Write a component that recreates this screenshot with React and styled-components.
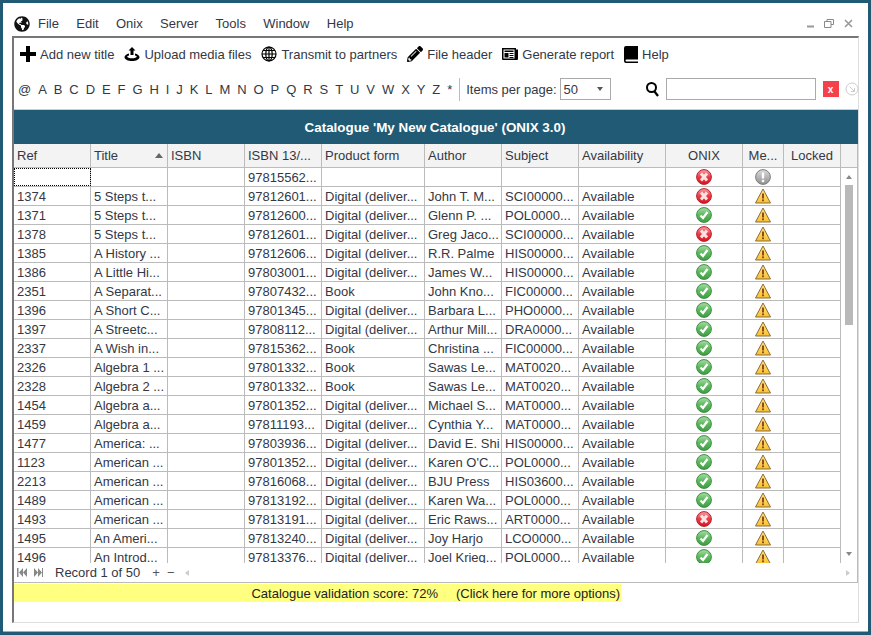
import React from 'react';
import styled, { createGlobalStyle } from 'styled-components';
import { FaPencilAlt, FaGlobeAmericas } from 'react-icons/fa';

const Global = createGlobalStyle`
  html, body { margin: 0; padding: 0; background: #fff; }
  * { box-sizing: border-box; }
`;

const Win = styled.div`
  width: 871px; height: 635px; border: 3px solid #205a74; background: #fff;
  font-family: "Liberation Sans", Arial, sans-serif; font-size: 13px; color: #343844;
  padding: 0 9px; display: flex; flex-direction: column; overflow: hidden;
  box-shadow: inset 0 -1px 0 #aaa;
`;
const TitleBar = styled.div`
  height: 33px; flex: none; display: flex; align-items: center; padding: 8px 0 0 2px;
`;
const MenuItem = styled.span`margin-left: ${p => p.$first ? '8px' : '17.300px'};`;
const WinControls = styled.div`margin-left: auto; display: flex; gap: 10px; align-items: center; padding-right: 6px;`;
const Panel = styled.div`
  flex: none; height: 587px; border: 1px solid #ddd; border-top: 2px solid #777; border-left: 2px solid #777;
  display: flex; flex-direction: column;
`;
const ActionBar = styled.div`height: 32px; flex: none; display: flex; align-items: center; padding: 0 0 0 6px; gap: 10px;`;
const ActionBtn = styled.span`display: inline-flex; align-items: center; gap: 4px; white-space: nowrap;`;
const FilterBar = styled.div`height: 40px; flex: none; display: flex; align-items: center; padding: 0 0 1px 4px; border-bottom: 1px solid #ccc; white-space: nowrap;`;
const Letter = styled.span`margin-right: 6.930px; flex: none;`;
const Divider = styled.span`flex: none; width: 1px; height: 23px; background: #bbb; margin: 0 6px 0 0;`;
const PerPage = styled.span`flex: none;`;
const PageSelect = styled.div`flex: none; width: 51px; height: 22px; border: 1px solid #aaa; margin-left: 3px; display: flex; align-items: center; padding: 0 7px 0 3px; justify-content: space-between;`;
const Caret = styled.span`width: 0; height: 0; border: 3.500px solid transparent; border-top: 4px solid #555; border-bottom: 0;`;
const SearchIcon = styled.svg`margin-left: 35px; flex: none;`;
const SearchBox = styled.div`flex: none; width: 150px; height: 22px; border: 1px solid #aaa; margin-left: 7px;`;
const ClearBtn = styled.span`flex: none; width: 16px; height: 16px; background: #f5424a; color: #fff; font-size: 10px; font-weight: bold; display: flex; align-items: center; justify-content: center; margin-left: 7px;`;
const Go = styled.svg`flex: none; margin-left: 6px;`;
const Caption = styled.div`height: 34px; flex: none; background: #205a74; color: #fff; font-weight: bold; font-size: 13.400px; display: flex; align-items: center; justify-content: center; padding-right: 2px;`;
const Grid = styled.div`height: 439px; flex: none; border-right: 1px solid #bbb; border-bottom: 1px solid #bbb; display: flex; flex-direction: column; position: relative;`;
const cols = '77px 77px 77px 77px 103px 77px 77px 87px 77px 41px 57px 16px';
const HeadRow = styled.div`height: 24px; flex: none; display: grid; grid-template-columns: ${cols}; background: #f3f3f3; border-bottom: 1px solid #bbb;`;
const HeadCell = styled.div`display: flex; align-items: center; justify-content: ${p => p.$center ? 'center' : 'space-between'}; padding: ${p => p.$center ? '0' : '0 4px 0 3px'}; border-right: 1px solid #bbb; white-space: nowrap; overflow: hidden;`;
const SortUp = styled.span`width: 0; height: 0; border: 4.500px solid transparent; border-bottom: 5px solid #666; border-top: 0;`;
const BodyWrap = styled.div`height: 395px; flex: none; overflow: hidden; position: relative;`;
const Row = styled.div`height: 19px; display: grid; grid-template-columns: ${cols}; border-bottom: 1px solid #bbb;`;
const Cell = styled.div`display: flex; align-items: center; justify-content: ${p => p.$center ? 'center' : 'flex-start'}; padding: ${p => p.$center ? '0' : '0 3px'}; border-right: 1px solid #bbb; white-space: nowrap; overflow: hidden; outline: ${p => p.$focus ? '1px dotted #000' : 'none'}; outline-offset: -1px;`;
const ScrollCell = styled.div`background: #f3f3f3;`;
const ScrollBar = styled.div`position: absolute; top: 0; right: 0; width: 16px; height: 395px; background: #fff;`;
const Thumb = styled.div`position: absolute; left: 4px; top: 17px; width: 8px; height: 140px; background: #b9b9b9;`;
const ArrowUp = styled.span`position: absolute; left: 5px; top: 7px; width: 0; height: 0; border: 3px solid transparent; border-bottom: 4px solid #888; border-top: 0;`;
const ArrowDown = styled.span`position: absolute; left: 5px; bottom: 7px; width: 0; height: 0; border: 3px solid transparent; border-top: 4px solid #888; border-bottom: 0;`;
const Footer = styled.div`height: 19px; flex: none; display: flex; align-items: center; padding: 0 0 0 3px;`;
const Pager = styled.svg`flex: none;`;
const RecordLabel = styled.span`margin: 0 12px 0 12px;`;
const FootOp = styled.span`margin-right: 7px; color: #555;`;
const TriRight = styled.span`margin-left: auto; margin-right: 7px; width: 0; height: 0; border: 3px solid transparent; border-left: 4px solid #ccc; border-right: 0;`;
const TriLeft = styled.span`margin-left: 4px; width: 0; height: 0; border: 3px solid transparent; border-right: 4px solid #ccc; border-left: 0;`;
const Score = styled.div`width: 607px; height: 18px; flex: none; margin-top: 1px; background: #ffff80; color: #222; display: flex; align-items: center; justify-content: flex-end; padding-right: 1px; white-space: pre;`;

const D = 'Digital (deliver...';
const A = 'Available';
const rows = [
  ['', '', '97815562...', '', '', '', '', 'r', 'g'],
  ['1374', '5 Steps t...', '97812601...', D, 'John T. M...', 'SCI00000...', A, 'r', 'w'],
  ['1371', '5 Steps t...', '97812600...', D, 'Glenn P. ...', 'POL0000...', A, 'o', 'w'],
  ['1378', '5 Steps t...', '97812601...', D, 'Greg Jaco...', 'SCI00000...', A, 'r', 'w'],
  ['1385', 'A History ...', '97812606...', D, 'R.R. Palme', 'HIS00000...', A, 'o', 'w'],
  ['1386', 'A Little Hi...', '97803001...', D, 'James W...', 'HIS00000...', A, 'o', 'w'],
  ['2351', 'A Separat...', '97807432...', 'Book', 'John Kno...', 'FIC00000...', A, 'o', 'w'],
  ['1396', 'A Short C...', '97801345...', D, 'Barbara L...', 'PHO0000...', A, 'o', 'w'],
  ['1397', 'A Streetc...', '97808112...', D, 'Arthur Mill...', 'DRA0000...', A, 'o', 'w'],
  ['2337', 'A Wish in...', '97815362...', 'Book', 'Christina ...', 'FIC00000...', A, 'o', 'w'],
  ['2326', 'Algebra 1 ...', '97801332...', 'Book', 'Sawas Le...', 'MAT0020...', A, 'o', 'w'],
  ['2328', 'Algebra 2 ...', '97801332...', 'Book', 'Sawas Le...', 'MAT0020...', A, 'o', 'w'],
  ['1454', 'Algebra a...', '97801352...', D, 'Michael S...', 'MAT0000...', A, 'o', 'w'],
  ['1459', 'Algebra a...', '97811193...', D, 'Cynthia Y...', 'MAT0000...', A, 'o', 'w'],
  ['1477', 'America: ...', '97803936...', D, 'David E. Shi', 'HIS00000...', A, 'o', 'w'],
  ['1123', 'American ...', '97801352...', D, "Karen O'C...", 'POL0000...', A, 'o', 'w'],
  ['2213', 'American ...', '97816068...', D, 'BJU Press', 'HIS03600...', A, 'o', 'w'],
  ['1489', 'American ...', '97813192...', D, 'Karen Wa...', 'POL0000...', A, 'o', 'w'],
  ['1493', 'American ...', '97813191...', D, 'Eric Raws...', 'ART0000...', A, 'r', 'w'],
  ['1495', 'An Ameri...', '97813240...', D, 'Joy Harjo', 'LCO0000...', A, 'o', 'w'],
  ['1496', 'An Introd...', '97813376...', D, 'Joel Krieg...', 'POL0000...', A, 'o', 'w'],
];

const GradientDefs = styled.svg`position: absolute;`;
const Defs = () => (
  <GradientDefs width="0" height="0">
    <defs>
      <linearGradient id="gr" x1="0" y1="0" x2="0" y2="1"><stop offset="0" stopColor="#f7a0a4" /><stop offset=".5" stopColor="#ea3c48" /><stop offset="1" stopColor="#d6141f" /></linearGradient>
      <linearGradient id="go" x1="0" y1="0" x2="0" y2="1"><stop offset="0" stopColor="#a8dca8" /><stop offset=".5" stopColor="#5cb85c" /><stop offset="1" stopColor="#3f9c45" /></linearGradient>
      <linearGradient id="gg" x1="0" y1="0" x2="0" y2="1"><stop offset="0" stopColor="#dcdcdc" /><stop offset="1" stopColor="#8f8f8f" /></linearGradient>
      <linearGradient id="gw" x1="0" y1="0" x2="0" y2="1"><stop offset="0" stopColor="#ffe98a" /><stop offset="1" stopColor="#f8c030" /></linearGradient>
    </defs>
  </GradientDefs>
);

const Status = ({ k }) => {
  if (k === 'w') return (
    <svg width="16" height="16" viewBox="0 0 16 16"><path d="M8 1 L15.500 15 H.5 Z" fill="url(#gw)" stroke="#8c6c34" strokeWidth="1" strokeLinejoin="round" /><path d="M8 5.500v5" stroke="#8a3a10" strokeWidth="1.800" /><rect x="7.100" y="11.400" width="1.800" height="1.800" fill="#8a3a10" /></svg>
  );
  const s = { r: '#b8202c', o: '#3d8f42', g: '#7d7d7d' }[k];
  return (
    <svg width="16" height="16" viewBox="0 0 16 16">
      <circle cx="8" cy="8" r="7.400" fill={`url(#g${k})`} stroke={s} />
      {k === 'r' && <path d="M5 4.500 L11 11.500 M11 4.500 L5 11.500" stroke="#fbe3e3" strokeWidth="3" />}
      {k === 'o' && <path d="M4.500 8.500 L7 11 L11.500 5" stroke="#fff" strokeWidth="2.200" fill="none" />}
      {k === 'g' && <><path d="M8 3.500v6" stroke="#fff" strokeWidth="2.400" /><rect x="6.800" y="10.800" width="2.400" height="2.400" fill="#fff" /></>}
    </svg>
  );
};

const letters = '@ABCDEFGHIJKLMNOPQRSTUVWXYZ*'.split('');

export default function App() {
  return (
    <Win>
      <Global />
      <Defs />
      <TitleBar>
        <FaGlobeAmericas size={16} color="#111" />
        {['File', 'Edit', 'Onix', 'Server', 'Tools', 'Window', 'Help'].map((m, i) => <MenuItem key={m} $first={i === 0}>{m}</MenuItem>)}
        <WinControls>
          <svg width="7" height="8" viewBox="0 0 7 8"><rect y="5.500" width="7" height="2" fill="#999" /></svg>
          <svg width="10" height="9" viewBox="0 0 10 9"><path d="M3 2V.5h6.500v5H7M.5 2.500h6.500v6H.5z" fill="none" stroke="#888" /></svg>
          <svg width="9" height="9" viewBox="0 0 9 9"><path d="M1 1l7 7M8 1l-7 7" stroke="#999" strokeWidth="1.600" /></svg>
        </WinControls>
      </TitleBar>
      <Panel>
        <ActionBar>
          <ActionBtn><svg width="16" height="16" viewBox="0 0 16 16"><path d="M6 0h4v6h6v4h-6v6H6v-6H0V6h6z" fill="#000" /></svg>Add new title</ActionBtn>
          <ActionBtn><svg width="16" height="16" viewBox="0 0 16 16"><path d="M8 1 L11.500 4.500 H9.500 V9 H6.500 V4.500 H4.500 Z" fill="#000" /><path d="M5 7.500 C2.500 8 .5 9.500 .5 11 C.5 13.500 4 15 8 15 C12 15 15.500 13.500 15.500 11 C15.500 9.500 13.500 8 11 7.500 V9.500 C12 9.800 12.800 10.300 12.800 10.800 C12.800 11.700 10.500 12.300 8 12.300 C5.500 12.300 3.200 11.700 3.200 10.800 C3.200 10.300 4 9.800 5 9.500 Z" fill="#000" /></svg>Upload media files</ActionBtn>
          <ActionBtn><svg width="16" height="16" viewBox="0 0 16 16" fill="none" stroke="#000" strokeWidth="1.200"><circle cx="8" cy="8" r="7" /><ellipse cx="8" cy="8" rx="3.200" ry="7" /><path d="M8 1v14M1 8h14M2 4.500h12M2 11.500h12" /></svg>Transmit to partners</ActionBtn>
          <ActionBtn><FaPencilAlt size={16} color="#000" />File header</ActionBtn>
          <ActionBtn><svg width="16" height="14" viewBox="0 0 16 14"><path d="M0 1h14v1.500h2v9.500q0 1-1 1H1q-1 0-1-1z" fill="#000" /><path d="M1.500 2.500h11v9h-11z" fill="#fff" /><path d="M2.500 3.500h9v1.500h-9zM2.500 6h4v4.500h-4zM7.500 6h4v1h-4zM7.500 8h4v1h-4zM7.500 10h4v1h-4z" fill="#000" /></svg>Generate report</ActionBtn>
          <ActionBtn><svg width="14" height="17" viewBox="0 0 14 17"><path d="M2 0h12v13.500H2.500q-1 0-1 1t1 1H14V17H2q-2 0-2-2V2q0-2 2-2z" fill="#000" /></svg>Help</ActionBtn>
        </ActionBar>
        <FilterBar>
          {letters.map(l => <Letter key={l}>{l}</Letter>)}
          <Divider />
          <PerPage>Items per page:</PerPage>
          <PageSelect>50<Caret /></PageSelect>
          <SearchIcon width="13" height="15" viewBox="0 0 13 15" fill="none" stroke="#000"><circle cx="5.500" cy="5.500" r="4.500" strokeWidth="2" /><path d="M8.500 9.500L12 14" strokeWidth="2.200" /></SearchIcon>
          <SearchBox />
          <ClearBtn>x</ClearBtn>
          <Go width="14" height="14" viewBox="0 0 14 14" fill="none" stroke="#ccc"><circle cx="7" cy="7" r="6" /><path d="M4.500 4.500L9.500 9.500M9.500 6v3.500H6" /></Go>
        </FilterBar>
        <Caption>Catalogue 'My New Catalogue' (ONIX 3.0)</Caption>
        <Grid>
          <HeadRow>
            <HeadCell>Ref</HeadCell>
            <HeadCell>Title<SortUp /></HeadCell>
            <HeadCell>ISBN</HeadCell>
            <HeadCell>ISBN 13/...</HeadCell>
            <HeadCell>Product form</HeadCell>
            <HeadCell>Author</HeadCell>
            <HeadCell>Subject</HeadCell>
            <HeadCell>Availability</HeadCell>
            <HeadCell $center>ONIX</HeadCell>
            <HeadCell $center>Me...</HeadCell>
            <HeadCell $center>Locked</HeadCell>
            <ScrollCell />
          </HeadRow>
          <BodyWrap>
            {rows.map((r, i) => (
              <Row key={i}>
                <Cell $focus={i === 0}>{r[0]}</Cell>
                <Cell>{r[1]}</Cell>
                <Cell />
                <Cell>{r[2]}</Cell>
                <Cell>{r[3]}</Cell>
                <Cell>{r[4]}</Cell>
                <Cell>{r[5]}</Cell>
                <Cell>{r[6]}</Cell>
                <Cell $center><Status k={r[7]} /></Cell>
                <Cell $center><Status k={r[8]} /></Cell>
                <Cell />
              </Row>
            ))}
            <ScrollBar><ArrowUp /><Thumb /><ArrowDown /></ScrollBar>
          </BodyWrap>
          <Footer>
            <Pager width="26" height="9" viewBox="0 0 26 9" fill="#888"><path d="M0 0h1.500v9H0zM6 0v9L2 4.500zM10 0v9L6 4.500z" /><path d="M17 0v9l4-4.500zM21 0v9l4-4.500zM25 0h1v9h-1z" /></Pager>
            <RecordLabel>Record 1 of 50</RecordLabel>
            <FootOp>+</FootOp>
            <FootOp>−</FootOp>
            <TriLeft />
            <TriRight />
          </Footer>
        </Grid>
        <Score>{'Catalogue validation score: 72%     (Click here for more options)'}</Score>
      </Panel>
    </Win>
  );
}
